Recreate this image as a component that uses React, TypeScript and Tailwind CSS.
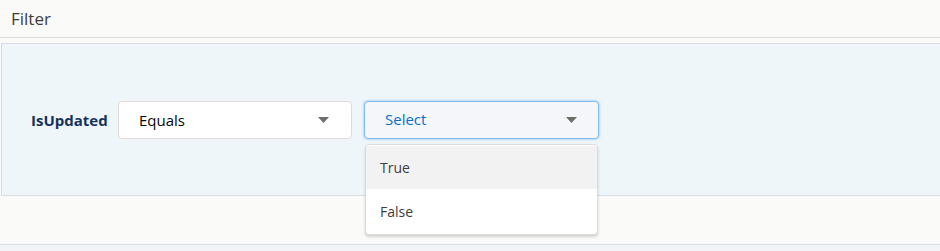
export default function App() {
  return (
    <div
      className="w-[940px] h-[251px] overflow-hidden bg-[#f3f4f7] text-[#3e3e3c]"
      style={{ fontFamily: '"Open Sans", "Liberation Sans", sans-serif' }}
    >
      <div className="bg-[#fafaf9]">
        {/* header */}
        <div className="h-[38px] border-b border-[#dddbda] px-[11px] flex items-center text-[17px] text-[#3e3e3c]">
          Filter
        </div>

        <div className="pt-[5px]">
          {/* filter panel */}
          <div className="ml-[1px] -mr-[4px] h-[153px] border border-[#d8dde6] bg-[#eff6fa] pt-[57px] pl-[29px]">
            <div className="flex items-center">
              <span className="w-[87px] text-[15px] font-bold text-[#16325c]">IsUpdated</span>

              <div className="w-[234px] h-[38px] rounded-[4px] border border-[#dddbda] bg-white flex items-center justify-between pl-[20px] pr-[22px] text-[15px] text-[#080707]">
                <span>Equals</span>
                <Caret />
              </div>

              <div className="relative ml-[12px]">
                <div className="w-[235px] h-[38px] rounded-[4px] border border-[#7fbcf0] shadow-[0_0_3px_#7fbcf0] bg-[#f4f6fa] flex items-center justify-between pl-[20px] pr-[21px] text-[15px] text-[#0a6ec5]">
                  <span className="-mt-[1px]">Select</span>
                  <Caret />
                </div>

                <div className="absolute left-[1px] right-[1px] top-[43px] z-10 rounded-[4px] border border-[#dddbda] bg-white py-[1px] shadow-[0_2px_3px_rgba(0,0,0,0.16)] text-[14px] text-[#3e3e3c]">
                  <div className="h-[43px] flex items-center px-[14px] bg-[#f3f2f2]">True</div>
                  <div className="h-[44px] flex items-center px-[14px]">False</div>
                </div>
              </div>
            </div>
          </div>

          <div className="h-[49px] border-b border-[#d8dde6]" />
        </div>
      </div>
    </div>
  );
}

function Caret() {
  return (
    <svg width="11" height="6" viewBox="0 0 11 6" className="text-[#706e6b]">
      <path d="M0 0h11L5.5 6z" fill="currentColor" />
    </svg>
  );
}
